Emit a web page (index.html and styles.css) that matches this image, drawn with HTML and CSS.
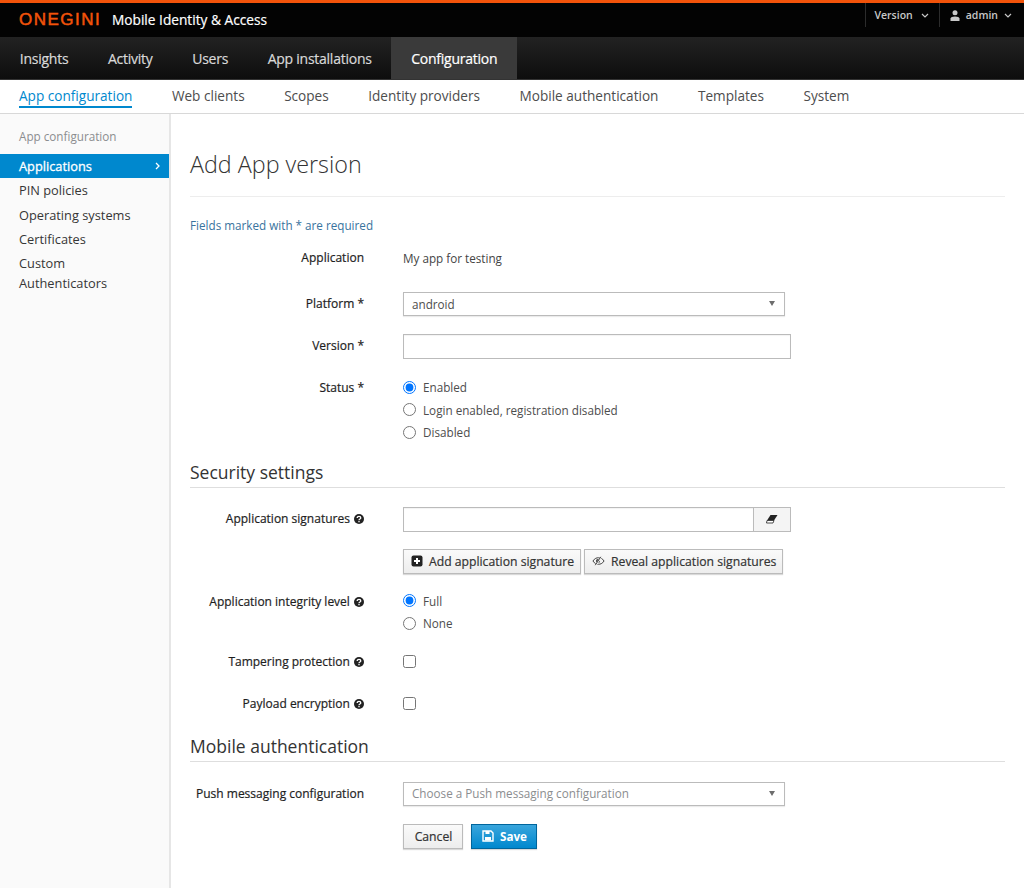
FILE: index.html
```html
<!DOCTYPE html>
<html lang="en">
  <head>
    <meta charset="UTF-8" />
    <title>Add App version</title>
    <link rel="stylesheet" href="styles.css">
  </head>
  <body>
    <header class="topbar">
      <div class="brand"><span class="logo">ONEGINI</span><span class="brand-name">Mobile Identity &amp; Access</span></div>
      <div class="top-menu">
        <div class="top-item">Version
          <svg class="chev" viewBox="0 0 8 5"><path d="M1 1l3 3 3-3" /></svg>
        </div>
        <div class="top-item top-user">
          <svg class="user-icon" viewBox="0 0 10 11"><circle cx="5" cy="2.8" r="2.5" /><path d="M0.5 11V8.6C0.5 7.2 2.5 6.4 5 6.4s4.500 0.8 4.500 2.200V11z" /></svg>
          admin
          <svg class="chev chev-user" viewBox="0 0 8 5"><path d="M1 1l3 3 3-3" /></svg>
        </div>
      </div>
    </header>

    <nav class="mainnav">
      <a>Insights</a>
      <a>Activity</a>
      <a>Users</a>
      <a>App installations</a>
      <a class="active">Configuration</a>
    </nav>

    <nav class="subnav">
      <a class="active">App configuration</a>
      <a>Web clients</a>
      <a>Scopes</a>
      <a>Identity providers</a>
      <a>Mobile authentication</a>
      <a>Templates</a>
      <a>System</a>
    </nav>

    <div class="page">
      <aside class="sidebar">
        <div class="side-title">App configuration</div>
        <a class="side-link active">Applications
          <svg class="side-chev" viewBox="0 0 5 8"><path d="M1 1l3 3-3 3" /></svg>
        </a>
        <a class="side-link">PIN policies</a>
        <a class="side-link">Operating systems</a>
        <a class="side-link">Certificates</a>
        <a class="side-link side-wrap">Custom Authenticators</a>
      </aside>

      <main class="content">
        <h1>Add App version</h1>
        <p class="required-note">Fields marked with * are required</p>

        <form>
          <div class="row row-app">
            <label>Application</label>
            <div class="static">My app for testing</div>
          </div>
          <div class="row row-platform">
            <label>Platform *</label>
            <div class="select">android<i class="caret"></i></div>
          </div>
          <div class="row row-version">
            <label>Version *</label>
            <input class="text-input" type="text" />
          </div>
          <div class="row row-status">
            <label>Status *</label>
            <div class="options">
              <div class="option"><input type="radio" name="status" checked />Enabled</div>
              <div class="option"><input type="radio" name="status" />Login enabled, registration disabled</div>
              <div class="option"><input type="radio" name="status" />Disabled</div>
            </div>
          </div>

          <h2 class="security">Security settings</h2>

          <div class="row row-sign">
            <label>Application signatures <svg class="help" viewBox="0 0 10 10"><circle cx="5" cy="5" r="5" /><path d="M3.200 4C3.200 3 4 2.400 5 2.400S6.800 3 6.800 4C6.800 5.100 5 5 5 6.200" /><path d="M5 6.900V8.200" /></svg></label>
            <div class="input-group">
              <input class="text-input" type="text" />
              <button class="addon" type="button">
                <svg viewBox="0 0 12 10" width="12" height="10"><path d="M4.500 1H11.500L8 6.500H1z" fill="#222" /><path d="M1 6.500H8L7 9H0.500z" fill="#fff" stroke="#222" stroke-width="0.8" /></svg>
              </button>
            </div>
          </div>
          <div class="row row-actions">
            <div></div>
            <div class="btn-line">
              <button class="btn" type="button">
                <svg class="btn-icon" viewBox="0 0 12 12"><rect x="0.500" y="0.500" width="11" height="11" rx="2" fill="#222" /><path d="M6 3v6M3 6h6" stroke="#fff" stroke-width="2" /></svg>
                Add application signature
              </button>
              <button class="btn" type="button">
                <svg class="btn-icon btn-icon-wide" viewBox="0 0 14 10"><path d="M1 5C3 2 5 1.500 7 1.500S11 2 13 5C11 8 9 8.500 7 8.500S3 8 1 5z" fill="none" stroke="#333" stroke-width="1" /><circle cx="6.500" cy="5" r="2.200" fill="#333" /><path d="M10 0.500L4 9.500" stroke="#f5f5f5" stroke-width="2" /><path d="M9.500 0.500L3.500 9.500" stroke="#333" stroke-width="1" /></svg>
                Reveal application signatures
              </button>
            </div>
          </div>
          <div class="row row-level">
            <label>Application integrity level <svg class="help" viewBox="0 0 10 10"><circle cx="5" cy="5" r="5" /><path d="M3.200 4C3.200 3 4 2.400 5 2.400S6.800 3 6.800 4C6.800 5.100 5 5 5 6.200" /><path d="M5 6.900V8.200" /></svg></label>
            <div class="options">
              <div class="option"><input type="radio" name="level" checked />Full</div>
              <div class="option"><input type="radio" name="level" />None</div>
            </div>
          </div>
          <div class="row row-check row-tamper">
            <label>Tampering protection <svg class="help" viewBox="0 0 10 10"><circle cx="5" cy="5" r="5" /><path d="M3.200 4C3.200 3 4 2.400 5 2.400S6.800 3 6.800 4C6.800 5.100 5 5 5 6.200" /><path d="M5 6.900V8.200" /></svg></label>
            <div><input type="checkbox" /></div>
          </div>
          <div class="row row-check">
            <label>Payload encryption <svg class="help" viewBox="0 0 10 10"><circle cx="5" cy="5" r="5" /><path d="M3.200 4C3.200 3 4 2.400 5 2.400S6.800 3 6.800 4C6.800 5.100 5 5 5 6.200" /><path d="M5 6.900V8.200" /></svg></label>
            <div><input type="checkbox" /></div>
          </div>

          <h2 class="mobile">Mobile authentication</h2>

          <div class="row row-push">
            <label>Push messaging configuration</label>
            <div class="select placeholder">Choose a Push messaging configuration<i class="caret"></i></div>
          </div>
          <div class="row row-submit">
            <div></div>
            <div class="btn-line btn-line-wide">
              <button class="btn btn-cancel" type="button">Cancel</button>
              <button class="btn btn-primary" type="button">
                <svg class="btn-icon" viewBox="0 0 12 12"><path d="M1 1h8l2 2v8H1z" fill="none" stroke="#fff" stroke-width="1.400" /><rect x="3.500" y="1" width="4" height="3" fill="#fff" /><rect x="3" y="7" width="6" height="3.500" fill="#fff" /></svg>
                Save
              </button>
            </div>
          </div>
        </form>
      </main>
    </div>
  </body>
</html>
```

FILE: styles.css
```css
* {
  box-sizing: border-box;
}

body {
  margin: 0;
  background-color: #fff;
  color: #333;
  font-family: "Open Sans", sans-serif;
  font-size: 11.7px;
}

/* top black bar */
.topbar {
  display: flex;
  justify-content: space-between;
  height: 37px;
  padding-left: 19px;
  background-color: #030303;
  border-top: 3px solid #f2530a;
}

.brand {
  display: flex;
  align-items: center;
  height: 34px;
}

.logo {
  width: 83px;
  margin-right: 10px;
  color: #f2530a;
  font-family: "Liberation Sans", sans-serif;
  font-size: 17px;
  letter-spacing: 1.5px;
  white-space: nowrap;
  -webkit-text-stroke: 0.5px #f2530a;
}

.brand-name {
  margin-bottom: 2px;
  color: #fff;
  font-size: 13.7px;
  -webkit-text-stroke: 0.2px #fff;
}

.top-menu {
  display: flex;
  height: 24px;
  padding-right: 12px;
}

.top-item {
  display: flex;
  align-items: center;
  padding: 0 10px 0 9px;
  border-left: 1px solid #2c2c2c;
  color: #c8c8c8;
  font-size: 10.5px;
  font-weight: 600;
}

.chev {
  width: 8px;
  height: 5px;
  margin-left: 8px;
  fill: none;
  stroke: #c8c8c8;
  stroke-width: 1.200;
}

.chev-user {
  margin-left: 6px;
}

.top-user {
  padding: 0 0 0 10px;
}

.user-icon {
  width: 10px;
  height: 11px;
  margin-right: 6px;
  fill: #c8c8c8;
}

/* main navigation */
.mainnav {
  display: flex;
  height: 43px;
  background: linear-gradient(#222, #0d0d0d);
  border-bottom: 1px solid #333;
}

.mainnav a {
  display: flex;
  align-items: center;
  height: 42px;
  padding: 0 19.800px;
  color: #d9d9d9;
  font-size: 14px;
  letter-spacing: -0.25px;
  -webkit-text-stroke: 0.2px #d9d9d9;
}

.mainnav a.active {
  background-color: #3a3a3a;
  color: #fff;
  -webkit-text-stroke: 0.2px #fff;
}

/* second navigation */
.subnav {
  display: flex;
  gap: 39.500px;
  height: 34px;
  padding-left: 19px;
  border-bottom: 1px solid #d8d8d8;
}

.subnav a {
  height: 28px;
  padding-top: 5px;
  color: #4d4d4d;
  font-size: 13.600px;
  line-height: 22px;
}

.subnav a.active {
  color: #0088ce;
  border-bottom: 2px solid #0088ce;
}

.page {
  display: flex;
  min-height: 775px;
}

/* left menu */
.sidebar {
  width: 171px;
  padding-top: 12px;
  background-color: #fafafa;
  border-right: 2px solid #e6e6e6;
}

.side-title {
  height: 28px;
  padding-left: 19px;
  color: #8b8d8f;
  font-size: 11.700px;
  line-height: 20px;
}

.side-link {
  display: flex;
  align-items: center;
  justify-content: space-between;
  height: 24.300px;
  padding: 0 9px 0 19px;
  color: #363636;
  font-size: 12.800px;
}

.side-link.active {
  background-color: #0088ce;
  color: #fff;
  -webkit-text-stroke: 0.3px #fff;
}

.side-wrap {
  display: block;
  height: auto;
  padding-top: 1.500px;
  padding-right: 40px;
  line-height: 20.800px;
}

.side-chev {
  width: 5px;
  height: 8px;
  fill: none;
  stroke: #fff;
  stroke-width: 1.300;
}

/* form area */
.content {
  flex: 1;
  padding: 0 19px;
}

h1 {
  height: 83px;
  margin: 0;
  padding-top: 32px;
  border-bottom: 1px solid #ededed;
  color: #333;
  font-size: 23.300px;
  font-weight: 300;
  line-height: 36px;
}

.required-note {
  margin: 19px 0 0;
  color: #39739e;
  font-size: 11.700px;
  line-height: 18px;
}

.row {
  display: grid;
  grid-template-columns: 174px 388px;
  column-gap: 39px;
  color: #333;
}

label {
  color: #1e1e1e;
  font-size: 12px;
  text-align: right;
  line-height: 23px;
  white-space: nowrap;
  -webkit-text-stroke: 0.2px #1e1e1e;
}

.row-app {
  margin-top: 12px;
  height: 24px;
  line-height: 24px;
}

.row-platform {
  margin-top: 22px;
}

.row-version {
  margin-top: 18px;
}

.row-status {
  margin-top: 17px;
}

.static {
  color: #444;
}

.select {
  display: flex;
  align-items: center;
  justify-content: space-between;
  width: 382px;
  height: 24px;
  padding: 0 9px 1px 8px;
  border: 1px solid #bbb;
  box-shadow: 0 1px 1px rgba(0, 0, 0, 0.08);
  background-color: #fff;
  color: #4d4d4d;
}

.select.placeholder {
  color: #8b8d8f;
}

.caret {
  width: 0;
  height: 0;
  border-top: 5px solid #6d6d6d;
  border-left: 3px solid transparent;
  border-right: 3px solid transparent;
}

.text-input {
  width: 100%;
  height: 25px;
  margin: 0;
  border: 1px solid #bbb;
  border-radius: 0;
  background-color: #fff;
  box-shadow: inset 0 1px 1px rgba(0, 0, 0, 0.05);
}

.options {
  display: flex;
  flex-direction: column;
  gap: 0;
}

.option {
  display: flex;
  align-items: center;
  height: 22.500px;
  color: #4d4d4d;
}

.option input {
  width: 13px;
  height: 13px;
  margin: 0 7px 0 0;
}

h2 {
  height: 27px;
  margin: 0;
  border-bottom: 1px solid #dedede;
  color: #333;
  font-size: 17.500px;
  font-weight: 400;
  line-height: 22px;
}

.security {
  margin-top: 17px;
}

.row-sign {
  margin-top: 19px;
}

.input-group {
  display: flex;
}

.addon {
  flex: none;
  width: 38px;
  height: 25px;
  margin-left: -1px;
  padding: 0;
  border: 1px solid #bbb;
  background-color: #f4f4f4;
}

.row-actions {
  margin-top: 17px;
}

.btn-line {
  display: flex;
  gap: 3px;
}

.btn-line-wide {
  gap: 8px;
}

.btn {
  display: flex;
  align-items: center;
  height: 25px;
  padding: 0 6px 0 7px;
  border: 1px solid #bbb;
  background: linear-gradient(#fafafa, #ededed);
  box-shadow: 0 1px 1px rgba(0, 0, 0, 0.15);
  color: #333;
  font-family: "Open Sans", sans-serif;
  font-size: 12.200px;
  white-space: nowrap;
  -webkit-text-stroke: 0.2px #333;
}

.btn-icon {
  flex: none;
  width: 12px;
  height: 12px;
  margin-right: 6px;
}

.btn-icon-wide {
  width: 13px;
}

.btn-cancel {
  width: 60px;
  justify-content: center;
}

.btn-primary {
  width: 66px;
  justify-content: center;
  border-color: #00659c;
  background: linear-gradient(#39a5dc, #0088ce);
  color: #fff;
  font-size: 11.700px;
  font-weight: 700;
  -webkit-text-stroke: 0;
}

.row-level {
  margin-top: 16px;
}

.row-check {
  height: 24px;
  margin-top: 18px;
  align-items: center;
}

.row-check label {
  padding-bottom: 1px;
}

.row-tamper {
  margin-top: 15px;
}

.row-check input {
  display: block;
  width: 13px;
  height: 13px;
  margin: 0;
}

.help {
  width: 10px;
  height: 10px;
  margin-left: 1px;
  vertical-align: -1px;
  fill: #222;
  stroke: #fff;
  stroke-width: 1.300;
}

.help circle {
  stroke: none;
}

.help path {
  fill: none;
}

.mobile {
  margin-top: 19px;
}

.row-push {
  margin-top: 20px;
}

.row-submit {
  margin-top: 18px;
}
```
